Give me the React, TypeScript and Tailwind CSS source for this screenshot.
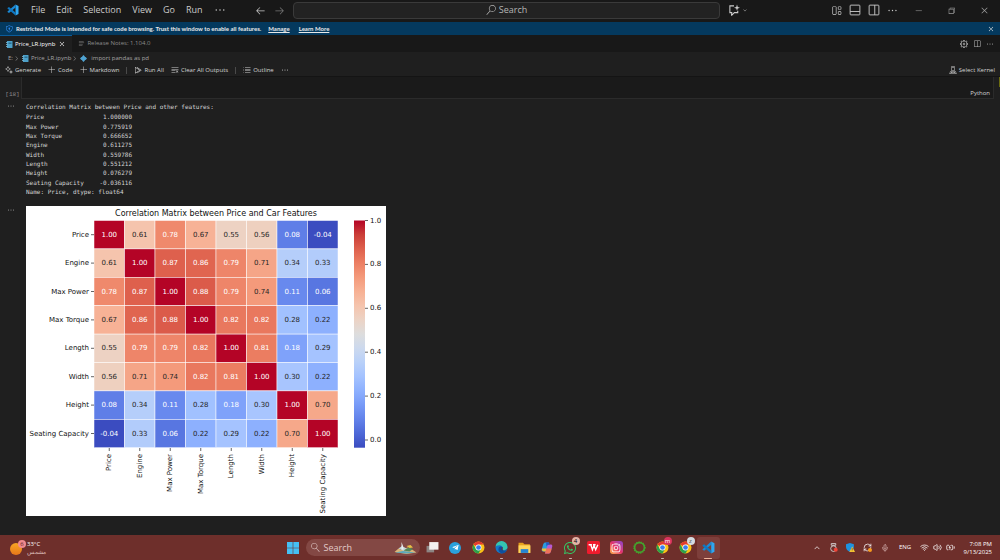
import React from 'react';
import {
  VscAdd,
  VscArrowLeft,
  VscArrowRight,
  VscChevronDown,
  VscChevronRight,
  VscChevronUp,
  VscChromeClose,
  VscChromeMinimize,
  VscChromeRestore,
  VscClearAll,
  VscClose,
  VscEllipsis,
  VscLayout,
  VscListFlat,
  VscListUnordered,
  VscRunAll,
  VscSearch,
  VscServerEnvironment,
  VscSettingsGear,
  VscShield,
  VscSparkle,
  VscSplitHorizontal,
} from 'react-icons/vsc';
import { FaInstagram, FaTelegramPlane, FaWhatsapp } from 'react-icons/fa';
import { BatteryCharging, Mic, RefreshCw, Volume2, Wifi } from 'lucide-react';

const MENUS = ['File', 'Edit', 'Selection', 'View', 'Go', 'Run'];

const SERIES: [string, string][] = [
  ['Price', '1.000000'],
  ['Max Power', '0.775919'],
  ['Max Torque', '0.666652'],
  ['Engine', '0.611275'],
  ['Width', '0.559786'],
  ['Length', '0.551212'],
  ['Height', '0.076279'],
  ['Seating Capacity', '-0.036116'],
];

const FEATURES = ['Price', 'Engine', 'Max Power', 'Max Torque', 'Length', 'Width', 'Height', 'Seating Capacity'];

const MATRIX = [
  [1, 0.61, 0.78, 0.67, 0.55, 0.56, 0.08, -0.04],
  [0.61, 1, 0.87, 0.86, 0.79, 0.71, 0.34, 0.33],
  [0.78, 0.87, 1, 0.88, 0.79, 0.74, 0.11, 0.06],
  [0.67, 0.86, 0.88, 1, 0.82, 0.82, 0.28, 0.22],
  [0.55, 0.79, 0.79, 0.82, 1, 0.81, 0.18, 0.29],
  [0.56, 0.71, 0.74, 0.82, 0.81, 1, 0.3, 0.22],
  [0.08, 0.34, 0.11, 0.28, 0.18, 0.3, 1, 0.7],
  [-0.04, 0.33, 0.06, 0.22, 0.29, 0.22, 0.7, 1],
];

// coolwarm colormap, evenly spaced
const COOLWARM = [
  [59, 76, 192], [77, 104, 215], [98, 130, 234], [119, 154, 247], [141, 176, 254],
  [163, 194, 255], [184, 208, 249], [204, 217, 238], [221, 221, 221], [236, 211, 197],
  [245, 196, 173], [247, 177, 148], [244, 154, 123], [236, 127, 99], [222, 96, 77],
  [203, 62, 56], [180, 4, 38],
];

const V_MIN = -0.04;
const CELL_W = 30.5;
const CELL_H = 28.4;
const LEFT = 68;
const TOP = 14.5;

const colorFor = (value: number) => {
  const t = ((value - V_MIN) / (1 - V_MIN)) * (COOLWARM.length - 1);
  const i = Math.min(Math.floor(t), COOLWARM.length - 2);
  const rgb = COOLWARM[i].map((c, k) => Math.round(c + (COOLWARM[i + 1][k] - c) * (t - i)));
  return `rgb(${rgb.join(',')})`;
};

const Heatmap: React.FC = () => (
  <svg
    viewBox="0 0 360 310"
    className="block h-[310px] w-[360px] bg-white font-['DejaVu_Sans',sans-serif] text-[7px]"
    role="img"
    aria-label="Correlation Matrix between Price and Car Features"
  >
    <defs>
      <linearGradient id="coolwarm" x1="0" y1="1" x2="0" y2="0">
        {COOLWARM.map((c, i) => (
          <stop key={i} offset={i / (COOLWARM.length - 1)} stopColor={`rgb(${c.join(',')})`} />
        ))}
      </linearGradient>
    </defs>
    <text x="190" y="10" textAnchor="middle" className="text-[8px]" fill="#111">
      Correlation Matrix between Price and Car Features
    </text>
    {MATRIX.map((row, r) =>
      row.map((value, c) => (
        <g key={`${r}-${c}`}>
          <rect
            x={LEFT + c * CELL_W}
            y={TOP + r * CELL_H}
            width={CELL_W}
            height={CELL_H}
            fill={colorFor(value)}
            stroke="#fff"
            strokeWidth="0.5"
          />
          <text
            x={LEFT + (c + 0.5) * CELL_W}
            y={TOP + (r + 0.5) * CELL_H + 2}
            textAnchor="middle"
            fill={value > 0.75 || value < 0.2 ? '#fff' : '#262626'}
          >
            {value.toFixed(2)}
          </text>
        </g>
      ))
    )}
    {FEATURES.map((name, i) => {
      const x = LEFT + (i + 0.5) * CELL_W;
      const y = TOP + (i + 0.5) * CELL_H;
      return (
        <g key={name} fill="#111">
          <path d={`M${LEFT - 3} ${y}H${LEFT}M${x} 242v3`} stroke="#222" strokeWidth="0.7" />
          <text x={LEFT - 5} y={y + 2} textAnchor="end">{name}</text>
          <text transform={`translate(${x + 2} 248) rotate(-90)`} textAnchor="end">{name}</text>
        </g>
      );
    })}
    <rect x="328" y={TOP} width="11" height={CELL_H * 8} fill="url(#coolwarm)" />
    {[0, 0.2, 0.4, 0.6, 0.8, 1].map((tick) => {
      const y = 234 - tick * 219.5;
      return (
        <g key={tick} fill="#111">
          <path d={`M339 ${y}h3`} stroke="#222" strokeWidth="0.7" />
          <text x="344" y={y + 2}>{tick.toFixed(1)}</text>
        </g>
      );
    })}
  </svg>
);

const CodeLogo: React.FC<{ className: string }> = ({ className }) => (
  <svg viewBox="0 0 24 24" className={className}>
    <path d="M17 1 23 4v16l-6 3z" fill="#2ea7f2" />
    <path d="M17 1v6L4 18l-3-2v-1z" fill="#1b8ad6" />
    <path d="M17 23v-6L4 6 1 8v1z" fill="#0f78c2" />
  </svg>
);

const NotebookIcon: React.FC<{ className: string }> = ({ className }) => (
  <svg viewBox="0 0 14 14" className={className}>
    <path d="M2 0h10a1 1 0 0 1 1 1v12a1 1 0 0 1-1 1H2z" fill="#4da0c8" />
    <path d="M0 3h3M0 7h3M0 11h3" stroke="#8cc8e4" strokeWidth="1.500" />
    <path d="M5 3h6v3H5z" fill="#2a6f92" />
  </svg>
);

const TitleBar: React.FC = () => (
  <header className="flex h-[22px] shrink-0 items-center bg-[#181818] pb-[2px] text-[#cccccc]">
    <div className="flex flex-1 items-center">
      <CodeLogo className="ml-[7px] mr-3 size-3" />
      <nav className="flex items-center gap-[11px]">
        {MENUS.map((menu) => (
          <button key={menu} className="text-[9px] leading-3">{menu}</button>
        ))}
      </nav>
      <button aria-label="More menus" className="ml-[11px]"><VscEllipsis className="size-3" /></button>
      <div className="ml-auto mr-2 flex gap-2">
        <button aria-label="Back"><VscArrowLeft className="size-[11px]" /></button>
        <button aria-label="Forward" className="text-[#777777]"><VscArrowRight className="size-[11px]" /></button>
      </div>
    </div>
    <button className="flex h-[17px] w-[427px] items-center justify-center gap-[3px] rounded border border-[#3a3a3a] bg-[#222222] text-[9px] text-[#b5b5b5]">
      <VscSearch className="size-[10px]" />
      Search
    </button>
    <div className="flex w-[280px] items-center">
      <button aria-label="Chat" className="ml-2 flex items-center gap-0.5">
        <svg viewBox="0 0 16 16" className="size-3" fill="none" stroke="currentColor" strokeWidth="1.4">
          <path d="M8 2.5H2.5v9H5V15l3.500-3.500H13V9" />
          <path d="M12 0.500 13 4l3 1-3 1-1 3-1-3-3-1 3-1z" fill="currentColor" stroke="none" />
        </svg>
        <VscChevronDown className="size-[6px]" />
      </button>
      <div className="ml-auto flex items-center gap-[7px]">
        <button aria-label="Customize layout"><VscLayout className="size-[11px]" /></button>
        <button aria-label="Toggle panel">
          <svg viewBox="0 0 16 16" className="size-3" fill="none" stroke="currentColor" strokeWidth="1.200">
            <rect x="1.500" y="1.500" width="13" height="13" rx="1" />
            <path d="M1.500 10h13" />
          </svg>
        </button>
        <button aria-label="Split layout">
          <svg viewBox="0 0 16 16" className="size-3" fill="none" stroke="currentColor" strokeWidth="1.200">
            <rect x="1.500" y="1.500" width="13" height="13" rx="1" />
            <path d="M9 1.500v13" />
          </svg>
        </button>
        <button aria-label="More"><VscEllipsis className="size-[11px]" /></button>
      </div>
      <div className="ml-4 mr-[11px] flex items-center gap-6 text-[#9a9a9a]">
        <button aria-label="Minimize"><VscChromeMinimize className="size-[9px]" /></button>
        <button aria-label="Restore"><VscChromeRestore className="size-[9px]" /></button>
        <button aria-label="Close"><VscChromeClose className="size-[9px]" /></button>
      </div>
    </div>
  </header>
);

const RestrictedBanner: React.FC = () => (
  <div className="flex h-[13px] shrink-0 items-center bg-[#04395e] px-[5px] font-['Lato','Noto_Sans',sans-serif] text-[6px] font-bold text-[#e8e8e8]">
    <VscShield className="mr-[3px] size-2 text-[#3794ff]" />
    <span>Restricted Mode is intended for safe code browsing. Trust this window to enable all features.</span>
    <a href="#manage" className="ml-[7px] underline">Manage</a>
    <a href="#learn" className="ml-[9px] underline">Learn More</a>
    <button aria-label="Dismiss" className="ml-auto"><VscClose className="size-2" /></button>
  </div>
);

const TabBar: React.FC = () => (
  <div className="flex h-[17px] shrink-0 items-center bg-[#181818] text-[6px]">
    <div className="flex h-full items-center border-t border-[#0a5c9c] bg-[#1f1f1f] px-[6px] text-white">
      <NotebookIcon className="mr-[2px] size-[7px]" />
      Price_LR.ipynb
      <button aria-label="Close tab" className="ml-[3px]"><VscClose className="size-2" /></button>
    </div>
    <div className="flex h-full items-center px-[6px] text-[#8c8c8c]">
      <VscListFlat className="mr-[2px] size-[7px]" />
      Release Notes: 1.104.0
    </div>
    <div className="ml-auto mr-[6px] flex items-center gap-[5px] text-[#bbbbbb]">
      <button aria-label="Settings"><VscSettingsGear className="size-2" /></button>
      <button aria-label="Split editor"><VscSplitHorizontal className="size-2" /></button>
      <button aria-label="More"><VscEllipsis className="size-2" /></button>
    </div>
  </div>
);

const Breadcrumbs: React.FC = () => (
  <nav className="flex h-3 shrink-0 items-center px-2 text-[6px] text-[#a5a5a5]">
    E:
    <VscChevronRight className="size-[7px]" />
    <NotebookIcon className="mx-[2px] size-[7px]" />
    Price_LR.ipynb
    <VscChevronRight className="size-[7px]" />
    <svg viewBox="0 0 10 10" className="ml-[2px] mr-1 size-[7px]" fill="#4fa3d1">
      <path d="M5 0l2 2v1h1l2 2-2 2H7v1L5 10 3 8V7H2L0 5l2-2h1V2z" />
    </svg>
    import pandas as pd
  </nav>
);

const NotebookToolbar: React.FC = () => (
  <div className="flex h-3 shrink-0 items-center gap-[7px] px-[5px] text-[6px] text-[#d4d4d4]">
    <button className="flex items-center gap-[2px]"><VscSparkle className="size-2" />Generate</button>
    <button className="flex items-center gap-[2px]"><VscAdd className="size-2" />Code</button>
    <button className="flex items-center gap-[2px]"><VscAdd className="size-2" />Markdown</button>
    <span className="h-[7px] border-l border-[#4a4a4a]" />
    <button className="flex items-center gap-[2px]"><VscRunAll className="size-2" />Run All</button>
    <button className="flex items-center gap-[2px]"><VscClearAll className="size-2" />Clear All Outputs</button>
    <span className="h-[7px] border-l border-[#4a4a4a]" />
    <button className="flex items-center gap-[2px]"><VscListUnordered className="size-2" />Outline</button>
    <button aria-label="More actions"><VscEllipsis className="size-2" /></button>
    <button className="ml-auto flex items-center gap-[2px]"><VscServerEnvironment className="size-2" />Select Kernel</button>
  </div>
);

const Notebook: React.FC = () => (
  <main className="min-h-0 flex-1 overflow-hidden text-[#d4d4d4]">
    <div className="flex h-[23px] border-t border-[#141414]">
      <div className="flex w-[21px] items-end justify-center pl-1 font-['Liberation_Mono',monospace] text-[6px] text-[#8a8a8a]">[18]</div>
      <div className="flex flex-1 items-end justify-end border-x border-b border-[#2b2b2b] bg-[#1a1a1a] pr-[3px] text-[6px]">Python</div>
      <div className="h-[10px] w-[6px] border-r border-[#6b6b10]" />
    </div>
    <div className="flex pt-[3px]">
      <div className="w-[26px] pl-[7px]"><VscEllipsis className="size-2 text-[#aaaaaa]" /></div>
      <div className="font-['DejaVu_Sans_Mono',monospace] text-[6px] leading-[10px]">
        <p>Correlation Matrix between Price and other features:</p>
        <table className="h-[75px] w-[106px] leading-[9px]">
          <tbody>
            {SERIES.map(([name, value]) => (
              <tr key={name}>
                <th scope="row" className="whitespace-nowrap p-0 text-left font-normal">{name}</th>
                <td className="p-0 text-right">{value}</td>
              </tr>
            ))}
          </tbody>
        </table>
        <p>Name: Price, dtype: float64</p>
      </div>
    </div>
    <div className="flex pt-[9px]">
      <div className="w-[26px] pl-[7px]"><VscEllipsis className="size-2 text-[#aaaaaa]" /></div>
      <Heatmap />
    </div>
  </main>
);

const ChromeIcon: React.FC = () => (
  <svg viewBox="0 0 24 24" className="size-[13px]">
    <circle cx="12" cy="12" r="11" fill="#fbc116" />
    <path d="M12 12 2.500 6.500A11 11 0 0 1 21.500 6.500H12z" fill="#e33b2e" />
    <path d="M2.500 6.500A11 11 0 0 0 12 23l5-8.500L12 12 7 14.500z" fill="#2ba24c" />
    <circle cx="12" cy="12" r="5.500" fill="#fff" />
    <circle cx="12" cy="12" r="4.300" fill="#3b7ded" />
  </svg>
);

const Badge: React.FC<{ className: string; children?: React.ReactNode }> = ({ className, children }) => (
  <span className={`absolute flex size-2 items-center justify-center rounded-full text-[6px] leading-none ${className}`}>
    {children}
  </span>
);

const APPS: { name: string; running?: boolean; active?: boolean; icon: React.ReactNode }[] = [
  {
    name: 'Task View',
    icon: (
      <svg viewBox="0 0 24 24" className="size-[13px]">
        <path d="M1 9h14v12H1z" fill="#8d8583" />
        <path d="M6 2h17v14H6z" fill="#f3f1f0" />
      </svg>
    ),
  },
  {
    name: 'Telegram',
    icon: <span className="flex size-3 items-center justify-center rounded-full bg-[#2aa1dc]"><FaTelegramPlane className="size-[7px] text-white" /></span>,
  },
  { name: 'Chrome', icon: <ChromeIcon /> },
  {
    name: 'Edge',
    running: true,
    icon: (
      <svg viewBox="0 0 24 24" className="size-[13px]">
        <circle cx="12" cy="12" r="11" fill="#1378c8" />
        <path d="M1 11A11 11 0 0 1 23 11c0 4-3 6-7 6-3 0-3-2-2-3 1-4-3-6-6-6-4 0-7 2-7 3z" fill="#35c6b0" />
        <path d="M7 12c2-3 6-2 7 1-2 2 0 5 4 5 2 0 3-1 4-2-2 5-6 7-10 7-5-2-7-7-5-11z" fill="#0d4f9e" />
        <path d="M14 11c1 2-1 3 0 5 3 2 7 1 9-3l-2 4-8 0c-2-2-1-5 1-6z" fill="#6b302e" />
      </svg>
    ),
  },
  {
    name: 'File Explorer',
    running: true,
    icon: (
      <svg viewBox="0 0 24 24" className="size-[13px]">
        <path d="M1 3h8l3 3h10v16H1z" fill="#e6a11c" />
        <path d="M1 8h22v14H1z" fill="#ffd55c" />
        <path d="M5 15h14v7H5z" fill="#2484d4" />
      </svg>
    ),
  },
  {
    name: 'Copilot',
    icon: (
      <svg viewBox="0 0 24 24" className="size-3">
        <path d="M8 1h8l-4 13c-1 4-2 5-5 5H4c-3 0-3-3-2-6l2-7c1-3 2-5 4-5z" fill="#2b9be0" />
        <path d="M2 13h10l-1 4c-1 2-2 2-4 2-4 0-6-2-5-6z" fill="#e8c23d" />
        <path d="M16 23H8l4-13c1-4 2-5 5-5h3c3 0 3 3 2 6l-2 7c-1 3-2 5-4 5z" fill="#b65ad4" />
        <path d="M8 23l3-10h10l-1 5c-1 3-2 5-4 5z" fill="#ee7458" />
        <path d="M10 1h6l2 4h-2c-3 0-4 2-5 4z" fill="#2458c4" />
      </svg>
    ),
  },
  {
    name: 'WhatsApp',
    running: true,
    icon: (
      <>
        <FaWhatsapp className="size-[14px] text-[#35c463]" />
        <Badge className="right-0.5 top-0 bg-[#e3b3a8] text-black">4</Badge>
      </>
    ),
  },
  {
    name: 'WPS Office',
    icon: (
      <svg viewBox="0 0 24 24" className="size-[13px]">
        <rect width="24" height="24" rx="3" fill="#ef1b2d" />
        <path d="M3 7h6M7 7l3 9 3-8 3 8 4-9M11 7h5" fill="none" stroke="#fff" strokeWidth="2.500" />
      </svg>
    ),
  },
  {
    name: 'Instagram',
    icon: (
      <span className="flex size-[13px] items-center justify-center rounded-[3px] bg-linear-to-tr from-[#fdb03b] via-[#e4306b] to-[#8a3ad0]">
        <FaInstagram className="size-[10px] text-white" />
      </span>
    ),
  },
  {
    name: 'Anaconda',
    icon: (
      <svg viewBox="0 0 24 24" className="size-[13px]" fill="none" stroke="#43a52e">
        <circle cx="12" cy="12" r="9" strokeWidth="3" />
        <circle cx="12" cy="12" r="10" strokeWidth="3" strokeDasharray="2 2" />
      </svg>
    ),
  },
  {
    name: 'Chrome profile 1',
    running: true,
    icon: <><ChromeIcon /><Badge className="right-0.5 top-0 bg-[#d8345f] text-white">m</Badge></>,
  },
  {
    name: 'Chrome profile 2',
    running: true,
    icon: <><ChromeIcon /><Badge className="right-0.5 top-0 bg-[#d5dbe0] text-[#444444]">z</Badge></>,
  },
  { name: 'Visual Studio Code', running: true, active: true, icon: <CodeLogo className="size-[13px]" /> },
];

const Taskbar: React.FC = () => (
  <footer className="grid h-[25px] shrink-0 grid-cols-[1fr_auto_1fr] items-center bg-[#6e2f2b] text-white">
    <button className="flex items-center gap-[3px] pl-[10px] text-left text-[6px] leading-2">
      <span className="relative size-[14px]">
        <span className="absolute bottom-0 left-0 size-3 rounded-full bg-linear-to-b from-[#f6a623] to-[#e8761a]" />
        <Badge className="-right-0.5 -top-px bg-[#f08a8e] text-[#5a1515]">6</Badge>
      </span>
      <span className="flex flex-col">
        <span>33°C</span>
        <span lang="ar" dir="rtl" className="text-[#d9b8b5]">مشمس</span>
      </span>
    </button>
    <div className="flex items-center pl-px">
      <button aria-label="Start" className="flex w-[23px] justify-center">
        <svg viewBox="0 0 12 12" className="size-3" fill="#45c0f5">
          <path d="M0 0h5.700v5.700H0zM6.300 0H12v5.700H6.300zM0 6.300h5.700V12H0zM6.300 6.300H12V12H6.300z" />
        </svg>
      </button>
      <button className="mx-px flex h-[17px] w-[114px] items-center rounded-full bg-[#834844] pl-[5px] pr-[3px] text-[9px] text-[#e2cbc9]">
        <VscSearch className="mr-1 size-[9px] -scale-x-100" />
        Search
        <svg viewBox="0 0 46 26" className="ml-auto h-[13px] w-[23px]">
          <path d="M1 22 9 15l6 3 12-5 9 4 9 6-20 3z" fill="#d9b77a" />
          <path d="M9 15 16 10l9 5-5 5z" fill="#c5d6d8" />
          <path d="M15 2l3 8 1 7h-4z" fill="#e9eef0" />
          <path d="M19 19l10-6 9 3-7 5z" fill="#52875a" />
          <path d="M2 23 18 20l25 3-18 2z" fill="#5aa9bd" />
          <path d="M25 10l8-2 5 5-7 1z" fill="#e8c046" />
        </svg>
      </button>
      {APPS.map((app) => (
        <button
          key={app.name}
          aria-label={app.name}
          className={`relative flex h-[22px] w-[23px] items-center justify-center rounded-[3px] ${app.active ? 'bg-[#7d3f3b]' : ''}`}
        >
          {app.icon}
          {app.running && (
            <span className={`absolute bottom-0 h-px rounded ${app.active ? 'w-2 bg-[#f0b59c]' : 'w-[3px] bg-[#cdb3b0]'}`} />
          )}
        </button>
      ))}
    </div>
    <div className="flex items-center justify-end pr-2 text-[6px]">
      <button aria-label="Hidden icons" className="flex w-[17px] justify-center"><VscChevronUp className="size-2" /></button>
      <button aria-label="Camera" className="relative flex w-[17px] justify-center">
        <svg viewBox="0 0 16 16" className="size-[9px]" fill="none" stroke="#ddd" strokeWidth="1.500">
          <circle cx="8" cy="10" r="5" />
          <path d="M4 1h8v3H4z" />
          <circle cx="12" cy="12" r="3.500" fill="#f04438" stroke="none" />
        </svg>
      </button>
      <button aria-label="Security" className="flex w-[17px] justify-center">
        <svg viewBox="0 0 16 16" className="size-[9px]">
          <path d="M7 0l7 2v5c0 4-3 7-7 9-4-2-7-5-7-9V2z" fill="#1e93e0" />
          <path d="M11 6l5 10H6z" fill="#f8c532" />
          <path d="M11 9v3.500m0 1v1" stroke="#333" />
        </svg>
      </button>
      <button aria-label="Updates" className="relative flex w-[17px] justify-center">
        <RefreshCw className="size-[9px]" />
        <span className="absolute bottom-0 right-1 size-1 rounded-full bg-[#f79a1c]" />
      </button>
      <button aria-label="Microphone" className="flex w-[17px] justify-center"><Mic className="size-2 text-[#d9b8b5]" /></button>
      <button className="w-6 text-center">ENG</button>
      <button aria-label="Network and sound" className="flex w-[38px] items-center justify-between pl-[3px]">
        <Wifi className="size-[9px]" />
        <Volume2 className="size-[9px]" />
        <BatteryCharging className="size-[9px]" />
      </button>
      <button className="w-[37px] text-right leading-2">
        7:08 PM
        <br />
        9/13/2025
      </button>
    </div>
  </footer>
);

const App: React.FC = () => (
  <div className="flex h-screen flex-col overflow-hidden bg-[#1f1f1f] font-['Open_Sans','Noto_Sans',sans-serif]">
    <TitleBar />
    <RestrictedBanner />
    <TabBar />
    <Breadcrumbs />
    <NotebookToolbar />
    <Notebook />
    <Taskbar />
  </div>
);

export default App;
